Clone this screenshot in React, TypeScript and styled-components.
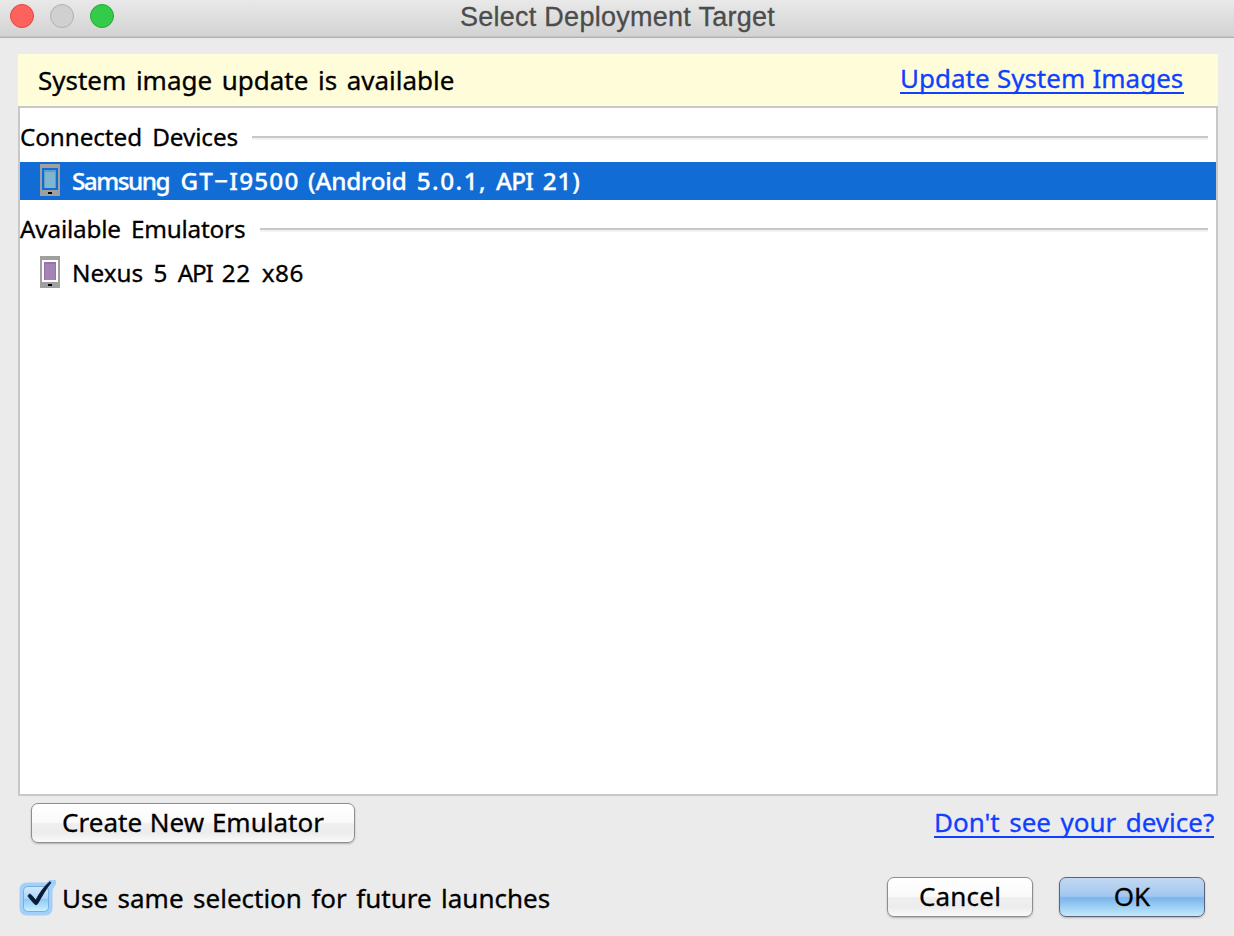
import React from 'react';
import styled, { createGlobalStyle } from 'styled-components';

const GlobalStyle = createGlobalStyle`
  *, *::before, *::after { box-sizing: border-box; }
  body { margin: 0; background: #ebebeb; }
`;

const Dialog = styled.div`
  width: 1234px;
  height: 936px;
  display: flex;
  flex-direction: column;
  overflow: hidden;
  background: #ebebeb;
  color: #000;
  font-family: 'Noto Sans', 'Open Sans', sans-serif;
  font-size: 26px;
  line-height: 36px;
  white-space: nowrap;
  -webkit-text-stroke: 0.3px currentColor;
`;

const TitleBar = styled.header`
  display: grid;
  grid-template-columns: 200px 1fr 200px;
  height: 38px;
  flex: none;
  background: linear-gradient(#e9e9e9, #d2d2d2);
  border-bottom: 1px solid #b0b0b0;
  box-shadow: inset 0 -1px #c6c6c6;
`;

const WindowControls = styled.div`
  display: flex;
  gap: 16px;
  padding: 4px 0 0 10px;
`;

const Light = styled.span<{ $fill: string; $edge: string }>`
  width: 24px;
  height: 24px;
  border-radius: 50%;
  background: ${(p) => p.$fill};
  border: 1px solid ${(p) => p.$edge};
`;

const Title = styled.h1`
  margin: 0;
  padding-left: 1px;
  text-align: center;
  font: 400 27px/34px 'Liberation Sans', Arial, sans-serif;
  letter-spacing: 0.27px;
  color: #4c4c4c;
`;

const Body = styled.main`
  display: flex;
  flex-direction: column;
  padding: 16px 16px 0 18px;
`;

const Banner = styled.div`
  display: flex;
  justify-content: space-between;
  align-items: flex-start;
  height: 52px;
  padding: 6px 34px 0 20px;
  background: #fffcd9;
`;

const Text = styled.span<{ $wordGap?: number; $drop?: number }>`
  word-spacing: ${(p) => p.$wordGap ?? 0}px;
  margin-top: ${(p) => p.$drop ?? 0}px;
`;

const Tracked = styled.span<{ $track: number; $after?: number }>`
  letter-spacing: ${(p) => p.$track}px;
  margin-right: ${(p) => p.$after ?? 0}px;
`;

const Link = styled.a<{ $wordGap: number; $width: number }>`
  width: ${(p) => p.$width}px;
  height: 34px;
  color: #1040ff;
  border-bottom: 2px solid #1040ff;
  word-spacing: ${(p) => p.$wordGap}px;
`;

const DeviceList = styled.section`
  height: 690px;
  background: #fff;
  border: 2px solid #c8c8c8;
  font-size: 24.3px;
`;

const GroupHeader = styled.div`
  display: flex;
  align-items: flex-start;
  gap: 14px;
  height: 54px;
  padding: 11px 8px 0 0;
`;

const Rule = styled.span`
  flex: 1;
  height: 4px;
  margin-top: 17px;
  background: #f3f3f3;
  border-top: 2px solid #c8c8c8;
`;

const GroupName = styled.span<{ $width: number; $track: number }>`
  width: ${(p) => p.$width}px;
  letter-spacing: ${(p) => p.$track}px;
  word-spacing: 4px;
`;

const DeviceRow = styled.div<{ $selected?: boolean }>`
  display: flex;
  align-items: flex-start;
  gap: 12px;
  height: 38px;
  padding: 1px 0 0 20px;
  background: ${(p) => (p.$selected ? '#126cd6' : 'transparent')};
  color: ${(p) => (p.$selected ? '#fff' : '#000')};
  font-weight: ${(p) => (p.$selected ? 500 : 400)};
  svg { margin-top: 1px; flex: none; }
`;

const ListActions = styled.div`
  display: flex;
  justify-content: space-between;
  align-items: flex-start;
  padding: 7px 4px 0 13px;
  height: 74px;
  a { margin-top: 1px; }
`;

const Button = styled.button<{ $width: number; $primary?: boolean; $wordGap?: number; $track?: number }>`
  width: ${(p) => p.$width}px;
  height: 40px;
  padding: 0 0 3px;
  border: 1.5px solid ${(p) => (p.$primary ? '#5d6280' : '#8e8e8e')};
  border-radius: 7px;
  background: ${(p) =>
    p.$primary
      ? 'linear-gradient(#c3d8f1 0%, #a2c7f0 48%, #79b4ed 52%, #a1d2f5 78%, #c4e9f8 100%)'
      : 'linear-gradient(#fff 0%, #fafafa 48%, #efefef 52%, #ececec 75%, #fafafa 100%)'};
  box-shadow: 0 1px 2px rgba(0, 0, 0, 0.25);
  color: #000;
  font: inherit;
  line-height: 36px;
  letter-spacing: ${(p) => p.$track ?? 0}px;
  word-spacing: ${(p) => p.$wordGap ?? 0}px;
`;

const Footer = styled.footer`
  display: flex;
  justify-content: space-between;
  align-items: flex-start;
  padding: 7px 13px 0 0;
`;

const CheckLabel = styled.label`
  display: flex;
  align-items: flex-start;
  gap: 4px;
  padding-top: 3px;
`;

const ButtonGroup = styled.div`
  display: flex;
  gap: 26px;
`;

function DeviceIcon({ screen, edge, inner }: { screen: string; edge: string; inner: string }) {
  return (
    <svg width="20" height="32" shapeRendering="crispEdges">
      <rect width="20" height="32" rx="1" fill="#9f9f9f" />
      <rect x="2" y="4" width="16" height="22" fill={inner} />
      <rect x="4" y="6" width="12" height="18" fill={edge} />
      <rect x="5" y="8" width="10" height="16" fill={screen} />
      <rect x="8" y="28" width="4" height="2" fill="#000" />
    </svg>
  );
}

function CheckIcon() {
  return (
    <svg width="40" height="40" viewBox="0 0 40 40">
      <defs>
        <linearGradient id="box" x1="0" y1="0" x2="0" y2="1">
          <stop offset="0" stopColor="#d4e8fa" />
          <stop offset="0.48" stopColor="#acd6f9" />
          <stop offset="0.52" stopColor="#8fc9f8" />
          <stop offset="1" stopColor="#ccf2ff" />
        </linearGradient>
      </defs>
      <rect x="1.5" y="2.5" width="33" height="33" rx="7" fill="#a3d0f8" />
      <path d="M25 7L31 0.5H37.5V4L32 13" fill="#a3d0f8" stroke="#a3d0f8" strokeLinejoin="round" />
      <rect x="5.5" y="6.5" width="25" height="25" rx="4" fill="url(#box)" stroke="#78ade0" />
      <path
        d="M10.2 16.6C9.8 14.2 12 13.2 13.6 15.2L17.8 20.2C21.5 13.2 26 6.4 31.8 1.8L33 2.6C27.8 9.4 24 16 19.8 23.6Q18.2 26 16.3 23.8Z"
        fill="#071b36"
        stroke="#071b36"
        strokeWidth="0.8"
        strokeLinejoin="round"
      />
    </svg>
  );
}

export default function App() {
  return (
    <Dialog>
      <GlobalStyle />
      <TitleBar>
        <WindowControls>
          <Light $fill="#ff615c" $edge="#e2463f" />
          <Light $fill="#d0d0d0" $edge="#b0b0b0" />
          <Light $fill="#34cb4b" $edge="#24a936" />
        </WindowControls>
        <Title>Select Deployment Target</Title>
      </TitleBar>
      <Body>
        <Banner>
          <Text $drop={2} $wordGap={2.8}>System image update is available</Text>
          <Link $width={284} $wordGap={0.5}>Update System Images</Link>
        </Banner>
        <DeviceList>
          <GroupHeader>
            <GroupName $width={218} $track={-0.1}>Connected Devices</GroupName>
            <Rule />
          </GroupHeader>
          <DeviceRow $selected>
            <DeviceIcon inner="#126cd6" edge="#5f9fc0" screen="#80b5d2" />
            <Text $wordGap={2}>
              <Tracked $track={-1.5} $after={4.5}>Samsung </Tracked>
              <Tracked $track={1.2} $after={-1}>GT−I9500 </Tracked>
              <Tracked $track={-0.2} $after={2}>(Android </Tracked>
              <Tracked $track={1.5} $after={-1}>5.0.1, </Tracked>
              <Tracked $track={-0.7} $after={2}>API </Tracked>
              <Tracked $track={0.8}>21)</Tracked>
            </Text>
          </DeviceRow>
          <GroupHeader>
            <GroupName $width={226} $track={-0.2}>Available Emulators</GroupName>
            <Rule />
          </GroupHeader>
          <DeviceRow>
            <DeviceIcon inner="#fff" edge="#9871a9" screen="#a583b7" />
            <Text $wordGap={4}>
              Nexus 5 <Tracked $track={-1.2}>API </Tracked>
              <Tracked $track={0.6}>22 x86</Tracked>
            </Text>
          </DeviceRow>
        </DeviceList>
        <ListActions>
          <Button $width={324} $wordGap={1}>Create New Emulator</Button>
          <Link $width={280} $wordGap={2.7}>Don't see your device?</Link>
        </ListActions>
        <Footer>
          <CheckLabel>
            <CheckIcon />
            <Text $wordGap={2.7}>Use same selection for future launches</Text>
          </CheckLabel>
          <ButtonGroup>
            <Button $width={146} $track={0.2}>Cancel</Button>
            <Button $width={146} $primary>OK</Button>
          </ButtonGroup>
        </Footer>
      </Body>
    </Dialog>
  );
}
